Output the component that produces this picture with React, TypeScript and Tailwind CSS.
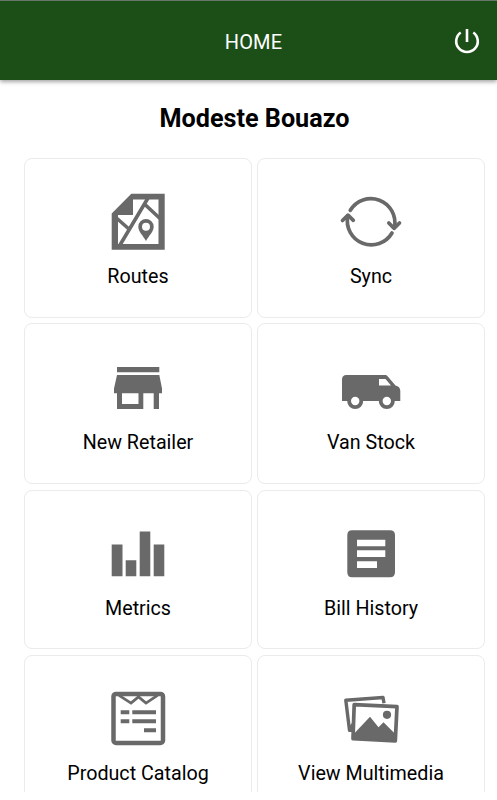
import type { ReactNode } from "react";

type Tile = {
  label: string;
  icon: ReactNode;
};

type IconProps = {
  children: ReactNode;
  viewBox?: string;
};

function Icon({ children, viewBox = "0 0 76 76" }: IconProps) {
  return (
    <svg
      viewBox={viewBox}
      className="h-[76px] w-[76px] shrink-0 text-[#696969]"
      fill="currentColor"
      aria-hidden="true"
    >
      {children}
    </svg>
  );
}

function RoutesIcon() {
  return (
    <Icon>
      <path
        fillRule="evenodd"
        d="M31.3 8.7H64.7V64.7H11.7V28.5ZM33 14.5V30H18V59H58.5V14.5Z"
      />
      <path
        d="M48 13L20 60M17 33.5L29.5 44.5M45.5 20L60 33.5"
        fill="none"
        stroke="currentColor"
        strokeWidth="3.6"
      />
      <path
        fillRule="evenodd"
        d="M46 34a7.7 7.7 0 0 1 7.7 7.7C53.7 46.5 49 50.5 46 56C43 50.5 38.3 46.5 38.3 41.7A7.7 7.7 0 0 1 46 34ZM46 37.7a4 4 0 1 0 0 8a4 4 0 1 0 0-8Z"
      />
    </Icon>
  );
}

function SyncIcon() {
  return (
    <Icon>
      <g
        fill="none"
        stroke="currentColor"
        strokeWidth="3.7"
        strokeLinecap="round"
        strokeLinejoin="round"
      >
        <path d="M17.3 25.3A24 24 0 0 1 61.5 42" />
        <path d="M59 48A24 24 0 0 1 14.8 31" />
        <path d="M55.8 38L61 43.3L66.5 38" />
        <path d="M9.5 35.5L15 30.2L20.3 35.3" />
      </g>
    </Icon>
  );
}

function RetailerIcon() {
  return (
    <Icon>
      <path d="M17 17H59.3V22.3H17Z" />
      <path
        fillRule="evenodd"
        d="M17 25H59.3L62 38.5V43.3H59V59H53.7V43.3H43.3V59H17V43.3H14V38.5ZM22 43.3V54H38.5V43.3Z"
      />
    </Icon>
  );
}

function VanIcon() {
  return (
    <Icon>
      <path
        fillRule="evenodd"
        d="M13.5 25H52C53 25 54 25.4 54.6 26.2L62.5 35.5C65.5 36 67.3 38 67.3 41V51H61.8A8 8 0 0 1 45.8 51H30.2A8 8 0 0 1 14.2 51H9V29.5Q9 25 13.5 25ZM46 29V35.5H58L52.5 29ZM22.2 46.8a4.2 4.2 0 1 0 0 8.4a4.2 4.2 0 1 0 0-8.4ZM53.8 46.8a4.2 4.2 0 1 0 0 8.4a4.2 4.2 0 1 0 0-8.4Z"
      />
    </Icon>
  );
}

function MetricsIcon() {
  return (
    <Icon viewBox="0 1.8 76 76">
      <path d="M11.7 29.3H22.5V61H11.7ZM25.7 45H36.3V61H25.7ZM39.7 16.3H50.3V61H39.7ZM53.7 29.3H64.3V61H53.7Z" />
    </Icon>
  );
}

function BillIcon() {
  return (
    <Icon viewBox="0 1.8 76 76">
      <path
        fillRule="evenodd"
        d="M19 15H57Q62 15 62 20V57Q62 62 57 62H19Q14.3 62 14.3 57V20Q14.3 15 19 15ZM24 24.5V31H52.3V24.5ZM24 35V41.7H52.3V35ZM24 46V52.7H44V46Z"
      />
    </Icon>
  );
}

function CatalogIcon() {
  return (
    <Icon viewBox="0 1.7 76 76">
      <rect
        x="13.5"
        y="13.6"
        width="49.5"
        height="49"
        rx="2.5"
        fill="none"
        stroke="currentColor"
        strokeWidth="4.5"
      />
      <path
        d="M19 15L31 22.8L38.5 16.6L46 22.8L57.5 15"
        fill="none"
        stroke="currentColor"
        strokeWidth="2.8"
      />
      <path d="M20.7 30H29.3V34H20.7ZM32.3 30H56V34H32.3ZM20.7 39H29.3V43H20.7ZM32.3 39H56V43H32.3ZM44 48H56V52H44Z" />
    </Icon>
  );
}

function MultimediaIcon() {
  return (
    <Icon viewBox="0 1.7 76 76">
      <path
        d="M51 23L50 17.2L12.8 20L16.5 50H20"
        fill="none"
        stroke="currentColor"
        strokeWidth="3.4"
        strokeLinejoin="round"
      />
      <path d="M15 48L21 40V51H15Z" />
      <path
        d="M21.2 24.3L64 26.3L62.3 60.5L20 58.3Z"
        fill="white"
        stroke="currentColor"
        strokeWidth="3.7"
        strokeLinejoin="round"
      />
      <path d="M20 54.5L37 36.5L45.5 47L50.5 42L62.5 54V60L20 58Z" />
      <circle cx="54" cy="34.5" r="4.1" />
    </Icon>
  );
}

const tiles: Tile[] = [
  { label: "Routes", icon: <RoutesIcon /> },
  { label: "Sync", icon: <SyncIcon /> },
  { label: "New Retailer", icon: <RetailerIcon /> },
  { label: "Van Stock", icon: <VanIcon /> },
  { label: "Metrics", icon: <MetricsIcon /> },
  { label: "Bill History", icon: <BillIcon /> },
  { label: "Product Catalog", icon: <CatalogIcon /> },
  { label: "View Multimedia", icon: <MultimediaIcon /> },
];

function Header() {
  return (
    <header className="grid h-20 shrink-0 grid-cols-[1fr_auto_1fr] items-center border-t border-[#66776a] bg-[#1c4f18] pr-[16.5px] pl-[26.5px] text-white shadow-[0_2px_4px_rgba(0,0,0,0.35)]">
      <h1 className="col-start-2 pt-0.5 text-xl leading-6 tracking-[0.2px]">
        HOME
      </h1>
      <button type="button" aria-label="Log out" className="justify-self-end">
        <svg viewBox="0 0.5 28 28" className="h-7 w-7" fill="none">
          <path
            d="M14 2.5V15.5M7.7 6A10.8 10.8 0 1 0 20.3 6"
            stroke="currentColor"
            strokeWidth="2.6"
          />
        </svg>
      </button>
    </header>
  );
}

function App() {
  return (
    <div className="h-[800px] bg-white font-['Roboto',sans-serif] text-black">
      <div className="flex h-[792px] flex-col overflow-hidden">
        <Header />
        <main className="pr-3 pl-6">
          <h2 className="pt-[25px] pb-[25px] text-center text-[25.2px] leading-7 font-bold">
            Modeste Bouazo
          </h2>
          <div className="grid grid-cols-2 grid-rows-[160px_161px_159.5px_160px] gap-x-[5px] gap-y-[5.4px]">
            {tiles.map((tile) => (
              <button
                key={tile.label}
                type="button"
                className="flex flex-col items-center rounded-lg border border-[#ebebeb] pt-[26px]"
              >
                {tile.icon}
                <span className="pt-[2.3px] text-[19.7px] leading-7">
                  {tile.label}
                </span>
              </button>
            ))}
          </div>
        </main>
      </div>
    </div>
  );
}

export default App;
